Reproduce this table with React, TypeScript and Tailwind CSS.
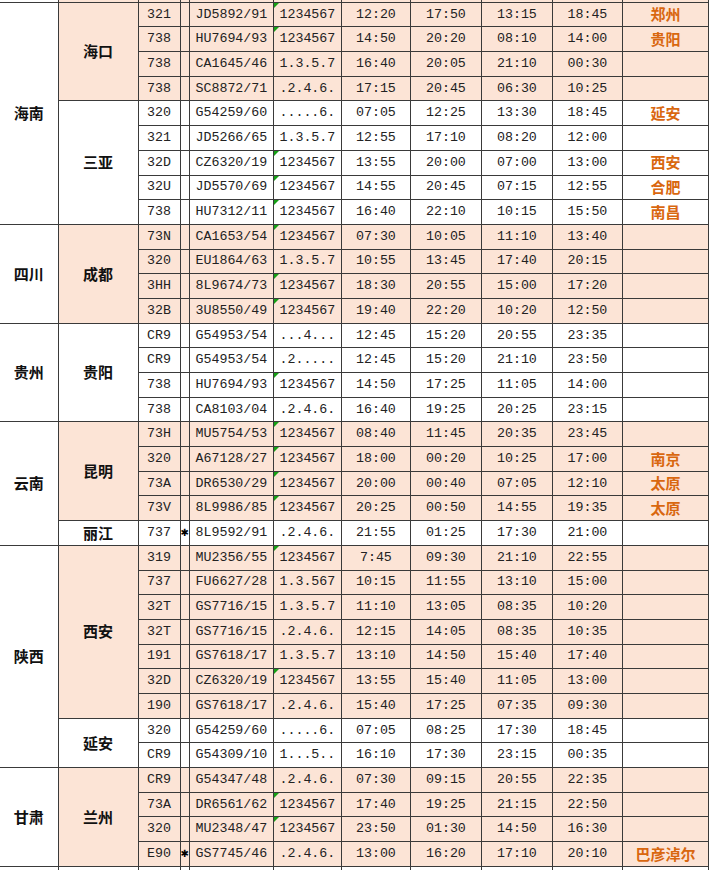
import React from 'react';

type Row = [string, string, string, string, string, string, string, string, string];

type City = { name: string; peach: boolean; rows: Row[] };
type Province = { name: string; cities: City[] };

const data: Province[] = [
  {
    name: '海南',
    cities: [
      {
        name: '海口',
        peach: true,
        rows: [
          ['321', '', 'JD5892/91', '1234567', '12:20', '17:50', '13:15', '18:45', '郑州'],
          ['738', '', 'HU7694/93', '1234567', '14:50', '20:20', '08:10', '14:00', '贵阳'],
          ['738', '', 'CA1645/46', '1.3.5.7', '16:40', '20:05', '21:10', '00:30', ''],
          ['738', '', 'SC8872/71', '.2.4.6.', '17:15', '20:45', '06:30', '10:25', ''],
        ],
      },
      {
        name: '三亚',
        peach: false,
        rows: [
          ['320', '', 'G54259/60', '.....6.', '07:05', '12:25', '13:30', '18:45', '延安'],
          ['321', '', 'JD5266/65', '1.3.5.7', '12:55', '17:10', '08:20', '12:00', ''],
          ['32D', '', 'CZ6320/19', '1234567', '13:55', '20:00', '07:00', '13:00', '西安'],
          ['32U', '', 'JD5570/69', '1234567', '14:55', '20:45', '07:15', '12:55', '合肥'],
          ['738', '', 'HU7312/11', '1234567', '16:40', '22:10', '10:15', '15:50', '南昌'],
        ],
      },
    ],
  },
  {
    name: '四川',
    cities: [
      {
        name: '成都',
        peach: true,
        rows: [
          ['73N', '', 'CA1653/54', '1234567', '07:30', '10:05', '11:10', '13:40', ''],
          ['320', '', 'EU1864/63', '1.3.5.7', '10:55', '13:45', '17:40', '20:15', ''],
          ['3HH', '', '8L9674/73', '1234567', '18:30', '20:55', '15:00', '17:20', ''],
          ['32B', '', '3U8550/49', '1234567', '19:40', '22:20', '10:20', '12:50', ''],
        ],
      },
    ],
  },
  {
    name: '贵州',
    cities: [
      {
        name: '贵阳',
        peach: false,
        rows: [
          ['CR9', '', 'G54953/54', '...4...', '12:45', '15:20', '20:55', '23:35', ''],
          ['CR9', '', 'G54953/54', '.2.....', '12:45', '15:20', '21:10', '23:50', ''],
          ['738', '', 'HU7694/93', '1234567', '14:50', '17:25', '11:05', '14:00', ''],
          ['738', '', 'CA8103/04', '.2.4.6.', '16:40', '19:25', '20:25', '23:15', ''],
        ],
      },
    ],
  },
  {
    name: '云南',
    cities: [
      {
        name: '昆明',
        peach: true,
        rows: [
          ['73H', '', 'MU5754/53', '1234567', '08:40', '11:45', '20:35', '23:45', ''],
          ['320', '', 'A67128/27', '1234567', '18:00', '00:20', '10:25', '17:00', '南京'],
          ['73A', '', 'DR6530/29', '1234567', '20:00', '00:40', '07:05', '12:10', '太原'],
          ['73V', '', '8L9986/85', '1234567', '20:25', '00:50', '14:55', '19:35', '太原'],
        ],
      },
      {
        name: '丽江',
        peach: false,
        rows: [['737', '*', '8L9592/91', '.2.4.6.', '21:55', '01:25', '17:30', '21:00', '']],
      },
    ],
  },
  {
    name: '陕西',
    cities: [
      {
        name: '西安',
        peach: true,
        rows: [
          ['319', '', 'MU2356/55', '1234567', '7:45', '09:30', '21:10', '22:55', ''],
          ['737', '', 'FU6627/28', '1.3.567', '10:15', '11:55', '13:10', '15:00', ''],
          ['32T', '', 'GS7716/15', '1.3.5.7', '11:10', '13:05', '08:35', '10:20', ''],
          ['32T', '', 'GS7716/15', '.2.4.6.', '12:15', '14:05', '08:35', '10:35', ''],
          ['191', '', 'GS7618/17', '1.3.5.7', '13:10', '14:50', '15:40', '17:40', ''],
          ['32D', '', 'CZ6320/19', '1234567', '13:55', '15:40', '11:05', '13:00', ''],
          ['190', '', 'GS7618/17', '.2.4.6.', '15:40', '17:25', '07:35', '09:30', ''],
        ],
      },
      {
        name: '延安',
        peach: false,
        rows: [
          ['320', '', 'G54259/60', '.....6.', '07:05', '08:25', '17:30', '18:45', ''],
          ['CR9', '', 'G54309/10', '1...5..', '16:10', '17:30', '23:15', '00:35', ''],
        ],
      },
    ],
  },
  {
    name: '甘肃',
    cities: [
      {
        name: '兰州',
        peach: true,
        rows: [
          ['CR9', '', 'G54347/48', '.2.4.6.', '07:30', '09:15', '20:55', '22:35', ''],
          ['73A', '', 'DR6561/62', '1234567', '17:40', '19:25', '21:15', '22:50', ''],
          ['320', '', 'MU2348/47', '1234567', '23:50', '01:30', '14:50', '16:30', ''],
          ['E90', '*', 'GS7745/46', '.2.4.6.', '13:00', '16:20', '17:10', '20:10', '巴彦淖尔'],
        ],
      },
    ],
  },
];

const widths = [58, 80, 42, 8, 84, 68, 69, 71, 71, 70, 86];
const cell = 'border border-[#3a3a3a] p-0 h-[24.7px] text-center align-middle';
const mono = "font-['Liberation_Mono',monospace] text-[13.3px] text-[#222]";
const cjk = "font-['Noto_Sans_CJK_SC',sans-serif] text-[15px] font-bold";

function Tick() {
  return (
    <span className="absolute left-0 top-0 w-0 h-0 border-t-[5px] border-t-[#16a016] border-r-[5px] border-r-transparent" />
  );
}

export default function App() {
  return (
    <div className="w-[715px] h-[870px] overflow-hidden bg-white">
      <table className="table-fixed border-collapse mt-[-23px]">
        <colgroup>
          {widths.map((w, i) => (
            <col key={i} style={{ width: w }} />
          ))}
        </colgroup>
        <tbody>
          {/* row cut off at the top */}
          <tr>
            <td className={`${cell} border-l-0 bg-white`} />
            {widths.slice(1).map((_, i) => (
              <td key={i} className={`${cell} bg-[#fce4d6] relative`}>
                {i === 4 && <Tick />}
              </td>
            ))}
          </tr>
          {data.map((p) => {
            const total = p.cities.reduce((n, c) => n + c.rows.length, 0);
            return p.cities.map((c, ci) =>
              c.rows.map((r, ri) => {
                const bg = c.peach ? 'bg-[#fce4d6]' : 'bg-white';
                return (
                  <tr key={p.name + c.name + ri}>
                    {ci === 0 && ri === 0 && (
                      <td rowSpan={total} className={`${cell} border-l-0 bg-white ${cjk} text-[#111]`}>
                        {p.name}
                      </td>
                    )}
                    {ri === 0 && (
                      <td rowSpan={c.rows.length} className={`${cell} ${bg} ${cjk} text-[#111]`}>
                        {c.name}
                      </td>
                    )}
                    <td className={`${cell} ${bg} ${mono}`}>{r[0]}</td>
                    <td className={`${cell} ${bg}`}>
                      {r[1] && (
                        <span className="block text-[10px] leading-none font-bold text-black font-['DejaVu_Sans',sans-serif]">
                          ✱
                        </span>
                      )}
                    </td>
                    <td className={`${cell} ${bg} ${mono}`}>{r[2]}</td>
                    <td className={`${cell} ${bg} ${mono} relative`}>
                      {r[3] === '1234567' && <Tick />}
                      {r[3]}
                    </td>
                    <td className={`${cell} ${bg} ${mono}`}>{r[4]}</td>
                    <td className={`${cell} ${bg} ${mono}`}>{r[5]}</td>
                    <td className={`${cell} ${bg} ${mono}`}>{r[6]}</td>
                    <td className={`${cell} ${bg} ${mono}`}>{r[7]}</td>
                    <td className={`${cell} ${bg} ${cjk} text-[#d9670f]`}>{r[8]}</td>
                  </tr>
                );
              })
            );
          })}
          {/* row cut off at the bottom */}
          <tr>
            {widths.map((_, i) => (
              <td key={i} className={`${cell} ${i === 0 ? 'border-l-0' : ''} bg-white`} />
            ))}
          </tr>
        </tbody>
      </table>
    </div>
  );
}
